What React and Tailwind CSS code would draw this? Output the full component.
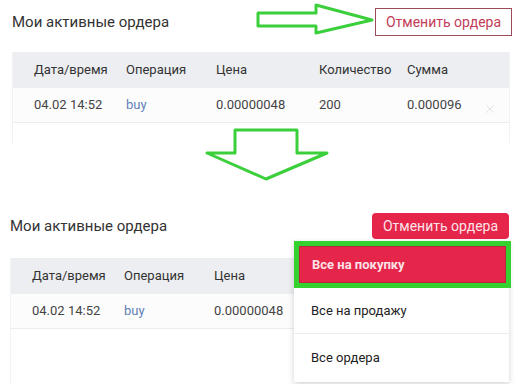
import { X } from 'lucide-react';

const COLS = ['Дата/время', 'Операция', 'Цена', 'Количество', 'Сумма'];
const ROW = ['04.02 14:52', 'buy', '0.00000048', '200', '0.000096'];

function RightArrow() {
  return (
    <svg className="absolute left-[255px] top-[2px]" width="120" height="34" viewBox="0 0 120 34">
      <polygon
        points="3,11 61,11 61,3 117,18 61,31 61,24 3,24"
        fill="none"
        stroke="#3ccf3c"
        strokeWidth="3"
        strokeLinejoin="round"
      />
    </svg>
  );
}

function DownArrow() {
  return (
    <svg className="absolute left-[204px] top-[127px]" width="126" height="56" viewBox="0 0 126 56">
      <polygon
        points="31,3 93,3 93,26 123,26 62,52 3,26 31,26"
        fill="none"
        stroke="#3ccf3c"
        strokeWidth="3"
        strokeLinejoin="round"
      />
    </svg>
  );
}

// cols = how many columns are visible (the rest sit under the dropdown)
function OrdersTable({ cols = 5 }) {
  return (
    <div className="w-[498px] border-x border-[#f1f2f4]">
      <div className="grid grid-cols-[92px_90px_103px_88px_1fr] items-center h-[36px] pl-[21px] bg-[#eceef1] text-[13px] text-[#333]">
        {COLS.slice(0, cols).map(c => <span key={c}>{c}</span>)}
      </div>
      <div className="grid grid-cols-[92px_90px_103px_88px_1fr] items-center h-[35px] pl-[21px] bg-[#fcfcfc] border-b border-[#ececec] text-[13px] text-[#444]">
        {ROW.slice(0, cols).map((c, i) => (
          <span key={i} className={i === 1 ? 'text-[#5f80b8]' : ''}>{c}</span>
        ))}
      </div>
    </div>
  );
}

export default function App() {
  return (
    <div className="relative w-[525px] h-[384px] overflow-hidden bg-white font-['Roboto',sans-serif]">
      {/* Before */}
      <div className="flex items-center justify-between pt-2 pl-3 pr-[13px] h-[36px]">
        <h2 className="text-[15px] text-[#333]">Мои активные ордера</h2>
        <button className="h-7 w-[137px] border border-[#9c4a5a] text-[14px] text-[#c23d58]">
          Отменить ордера
        </button>
      </div>
      <div className="relative mt-4 ml-3">
        <OrdersTable />
        <X size={14} strokeWidth={1.5} color="#dedede" className="absolute left-[471px] top-[50px]" />
        <div className="h-[20px] w-[498px] border-x border-[#f1f2f4]" />
      </div>

      {/* After */}
      <div className="flex items-center justify-between mt-[70px] pl-[10px] pr-4 h-[26px]">
        <h2 className="text-[15px] text-[#333]">Мои активные ордера</h2>
        <button className="h-[26px] w-[137px] rounded-sm bg-[#e5254a] text-[14px] text-[#fbe3e8]">
          Отменить ордера
        </button>
      </div>
      <div className="mt-[19px] ml-[10px]">
        <OrdersTable cols={3} />
        <div className="h-[60px] w-[498px] border-x border-[#f1f2f4]" />
      </div>

      <div className="absolute left-[294px] top-[241px] w-[215px] bg-white shadow-[0_2px_6px_rgba(0,0,0,0.18)] text-[13px] text-[#222]">
        <div className="border-[5px] border-[#35d12f] -mr-[2px]">
          <div className="h-[37px] flex items-center pl-3 bg-[#e5254a] border border-[#b5283f] font-bold text-[#fbe1e7]">
            Все на покупку
          </div>
        </div>
        <div className="h-[46px] flex items-center pl-[17px] border-b border-[#ececec]">Все на продажу</div>
        <div className="h-[48px] flex items-center pl-[17px]">Все ордера</div>
      </div>

      <RightArrow />
      <DownArrow />
    </div>
  );
}
